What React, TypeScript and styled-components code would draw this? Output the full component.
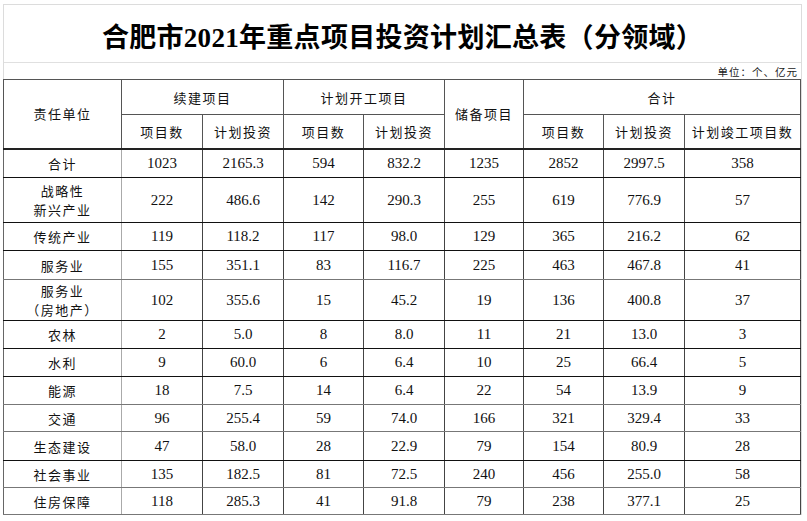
import React from 'react';
import styled, { createGlobalStyle } from 'styled-components';

const GlobalStyle = createGlobalStyle`
  html, body {
    margin: 0;
    padding: 0;
    background: #ffffff;
  }
  body {
    font-family: "Noto Sans CJK SC", "Liberation Sans", sans-serif;
    color: #111;
  }
`;

const Sheet = styled.div`
  width: 799px;
  margin: 4px 0 0 3px;
  border: 1px solid #dcdcdc;
  border-bottom: none;
  box-sizing: border-box;
`;

const TitleBox = styled.div`
  height: 57px;
  display: flex;
  align-items: center;
  justify-content: center;
  border-bottom: 1px solid #e0e0e0;
`;

const Title = styled.h1`
  margin: 0;
  font-family: "Liberation Serif", "Noto Sans CJK SC", serif;
  font-size: 27px;
  font-weight: 700;
  letter-spacing: 0.3px;
  color: #000;
  padding-top: 4px;
`;

const UnitRow = styled.div`
  height: 16px;
  display: flex;
  align-items: center;
  justify-content: flex-end;
  padding-right: 3px;
  font-size: 10.5px;
  letter-spacing: 1px;
  color: #222;
`;

const Table = styled.table`
  border-collapse: collapse;
  table-layout: fixed;
  width: 797px;
  margin-left: -1px;
  border: 1px solid #666;
`;

const HeadCell = styled.th<{ $thick?: boolean }>`
  font-weight: 400;
  font-size: 13px;
  letter-spacing: 1.5px;
  border: 1px solid #555;
  border-bottom: ${p => (p.$thick ? '2px solid #222' : '1px solid #555')};
  padding: 0;
  text-align: center;
  vertical-align: middle;
`;

const HeadRow = styled.tr<{ $h: number }>`
  height: ${p => p.$h}px;
`;

const BodyRow = styled.tr<{ $h: number; $dark?: boolean }>`
  height: ${p => p.$h}px;
  td {
    border-bottom: 1px solid ${p => (p.$dark ? '#111' : '#777')};
  }
`;

const NameCell = styled.td`
  font-size: 13px;
  letter-spacing: 1.5px;
  line-height: 19px;
  text-align: center;
  border-left: 1px solid #666;
  border-right: 1px solid #aaa;
  padding: 0;
`;

const NameLine = styled.div`
  height: 19px;
  white-space: nowrap;
`;

const NumCell = styled.td`
  font-family: "Liberation Serif", serif;
  font-size: 15px;
  text-align: center;
  border-left: 1px solid #444;
  border-right: 1px solid #444;
  padding: 0;
`;

interface Row {
  name: string[];
  values: string[];
  h: number;
  dark?: boolean;
}

const rows: Row[] = [
  { name: ['合计'], values: ['1023', '2165.3', '594', '832.2', '1235', '2852', '2997.5', '358'], h: 29, dark: true },
  { name: ['战略性', '新兴产业'], values: ['222', '486.6', '142', '290.3', '255', '619', '776.9', '57'], h: 45, dark: true },
  { name: ['传统产业'], values: ['119', '118.2', '117', '98.0', '129', '365', '216.2', '62'], h: 28, dark: true },
  { name: ['服务业'], values: ['155', '351.1', '83', '116.7', '225', '463', '467.8', '41'], h: 29 },
  { name: ['服务业', '（房地产）'], values: ['102', '355.6', '15', '45.2', '19', '136', '400.8', '37'], h: 41, dark: true },
  { name: ['农林'], values: ['2', '5.0', '8', '8.0', '11', '21', '13.0', '3'], h: 28, dark: true },
  { name: ['水利'], values: ['9', '60.0', '6', '6.4', '10', '25', '66.4', '5'], h: 28, dark: true },
  { name: ['能源'], values: ['18', '7.5', '14', '6.4', '22', '54', '13.9', '9'], h: 28 },
  { name: ['交通'], values: ['96', '255.4', '59', '74.0', '166', '321', '329.4', '33'], h: 27 },
  { name: ['生态建设'], values: ['47', '58.0', '28', '22.9', '79', '154', '80.9', '28'], h: 29, dark: true },
  { name: ['社会事业'], values: ['135', '182.5', '81', '72.5', '240', '456', '255.0', '58'], h: 27 },
  { name: ['住房保障'], values: ['118', '285.3', '41', '91.8', '79', '238', '377.1', '25'], h: 27 },
];

const colWidths = [118, 81, 81, 80, 81, 79, 80, 81, 116];

export default function App() {
  return (
    <>
      <GlobalStyle />
      <Sheet>
        <TitleBox>
          <Title>合肥市2021年重点项目投资计划汇总表（分领域）</Title>
        </TitleBox>
        <UnitRow>单位：个、亿元</UnitRow>
        <Table>
          <colgroup>
            {colWidths.map((w, i) => (
              <col key={i} style={{ width: w }} />
            ))}
          </colgroup>
          <thead>
            <HeadRow $h={35}>
              <HeadCell rowSpan={2} $thick>责任单位</HeadCell>
              <HeadCell colSpan={2}>续建项目</HeadCell>
              <HeadCell colSpan={2}>计划开工项目</HeadCell>
              <HeadCell rowSpan={2} $thick>储备项目</HeadCell>
              <HeadCell colSpan={3}>合计</HeadCell>
            </HeadRow>
            <HeadRow $h={34}>
              <HeadCell $thick>项目数</HeadCell>
              <HeadCell $thick>计划投资</HeadCell>
              <HeadCell $thick>项目数</HeadCell>
              <HeadCell $thick>计划投资</HeadCell>
              <HeadCell $thick>项目数</HeadCell>
              <HeadCell $thick>计划投资</HeadCell>
              <HeadCell $thick>计划竣工项目数</HeadCell>
            </HeadRow>
          </thead>
          <tbody>
            {rows.map(r => (
              <BodyRow key={r.name.join('')} $h={r.h} $dark={r.dark}>
                <NameCell>
                  {r.name.map((n, i) => (
                    <NameLine key={i}>{n}</NameLine>
                  ))}
                </NameCell>
                {r.values.map((v, i) => (
                  <NumCell key={i}>{v}</NumCell>
                ))}
              </BodyRow>
            ))}
          </tbody>
        </Table>
      </Sheet>
    </>
  );
}
